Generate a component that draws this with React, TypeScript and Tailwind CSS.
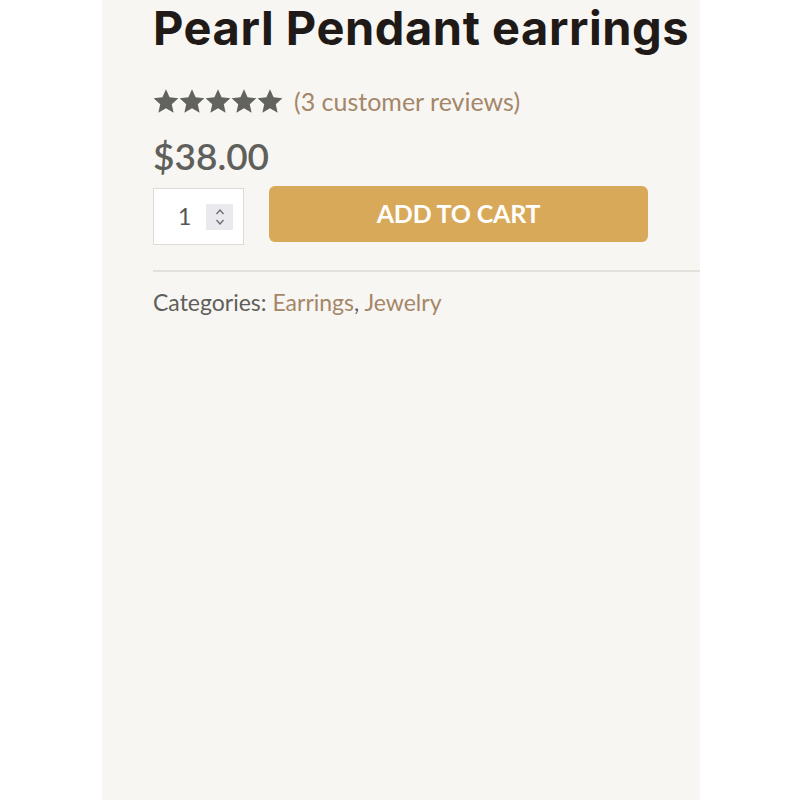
const body = { fontFamily: "Lato, 'Open Sans', sans-serif" };

function Star() {
  return (
    <svg viewBox="0 0 24 23" className="h-[25px] w-[26px]" fill="#62625e" preserveAspectRatio="none">
      <polygon points="12,0.2 15.29,7.67 23.41,8.49 17.33,13.93 19.05,21.91 12,17.8 4.95,21.91 6.67,13.93 0.59,8.49 8.71,7.67" />
    </svg>
  );
}

export default function App() {
  return (
    <div className="min-h-[800px] w-full bg-white">
      <div className="ml-[102px] min-h-[800px] w-[598px] bg-[#f8f6f2] pl-[51px]" style={body}>
        <h1
          className="pt-[2px] text-[47px] font-bold leading-[52px] tracking-[0.55px] text-[#1f1a17]"
          style={{ fontFamily: "Inter, 'Open Sans', sans-serif" }}
        >
          Pearl Pendant earrings
        </h1>

        <div className="mt-[33px] flex items-center">
          <div className="flex">
            <Star />
            <Star />
            <Star />
            <Star />
            <Star />
          </div>
          <span className="ml-[11px] text-[25px] leading-[28px] text-[#a4876a]">(3 customer reviews)</span>
        </div>

        <div className="mt-[19px] text-[37px] font-semibold leading-[44px] text-[#5f5f5c]">$38.00</div>

        <div className="mt-[8px] flex items-start">
          <div className="mt-[2px] flex h-[57px] w-[91px] items-center border border-[#dedbd6] bg-white">
            <span className="ml-[24px] text-[23px] leading-none text-[#555]">1</span>
            <div className="ml-[15px] flex h-[26px] w-[27px] flex-col items-center justify-center bg-[#e9e9ee]">
              <svg viewBox="0 0 12 20" className="h-[20px] w-[12px]" fill="none" stroke="#6b6b70" strokeWidth="1.3">
                <path d="M2.5 7l3.5-4 3.5 4" />
                <path d="M2.5 13l3.5 4 3.5-4" />
              </svg>
            </div>
          </div>
          <button className="ml-[25px] flex h-[56px] w-[379px] items-center justify-center rounded-[6px] bg-[#d9a95a] text-[25px] font-bold tracking-[-0.2px] text-white">
            ADD TO CART
          </button>
        </div>

        <div className="mt-[25px] h-[2px] w-[547px] bg-[#e4e1dc]" />

        <div className="mt-[16px] text-[23px] leading-[28px] text-[#5f5f5c]">
          Categories: <span className="text-[#a4876a]">Earrings</span>, <span className="text-[#a4876a]">Jewelry</span>
        </div>
      </div>
    </div>
  );
}
